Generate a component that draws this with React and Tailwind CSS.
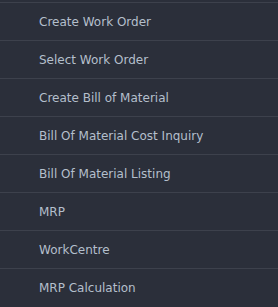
export default function App() {
  const items = [
    "Create Work Order",
    "Select Work Order",
    "Create Bill of Material",
    "Bill Of Material Cost Inquiry",
    "Bill Of Material Listing",
    "MRP",
    "WorkCentre",
    "MRP Calculation",
  ];
  return (
    <div className="w-[278px] h-[307px] overflow-hidden bg-[#2b2f3a] pt-[2px] font-['DejaVu_Sans',sans-serif]">
      <ul>
        {items.map((item) => (
          <li
            key={item}
            className="h-[38px] border-t border-[#3d414c] flex items-center pl-[39px] text-[12px] text-[#b4bfcc]"
          >
            {item}
          </li>
        ))}
      </ul>
    </div>
  );
}
